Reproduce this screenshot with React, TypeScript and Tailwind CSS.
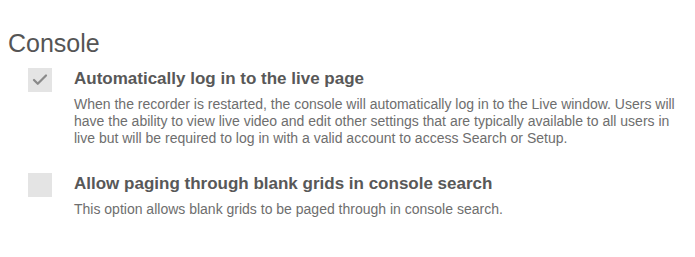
import { Check } from 'lucide-react';

interface Option {
  title: string;
  description: string;
  checked: boolean;
}

const options: Option[] = [
  {
    title: 'Automatically log in to the live page',
    description:
      'When the recorder is restarted, the console will automatically log in to the Live window. Users will have the ability to view live video and edit other settings that are typically available to all users in live but will be required to log in with a valid account to access Search or Setup.',
    checked: true,
  },
  {
    title: 'Allow paging through blank grids in console search',
    description: 'This option allows blank grids to be paged through in console search.',
    checked: false,
  },
];

export default function App() {
  return (
    <div className="w-[695px] h-[257px] bg-white font-['Liberation_Sans',Arial,sans-serif] pl-2 pt-[29px]">
      <h1 className="text-[25px] leading-[28px] text-[#555]">Console</h1>
      <div className="mt-[11px] flex flex-col gap-[26px]">
        {options.map((opt) => (
          <div key={opt.title} className="flex items-start pl-[20px]">
            <div className="w-[24px] h-[24px] bg-[#e4e4e4] flex items-center justify-center shrink-0">
              {opt.checked && <Check size={18} strokeWidth={3} className="text-[#8a8a8a] -ml-[1px]" />}
            </div>
            <div className="ml-[22px] w-[612px]">
              <div className="mt-[1px] text-[17px] leading-[20px] font-bold text-[#585858]">{opt.title}</div>
              <p className="mt-[7px] text-[14px] leading-[17px] text-[#6e6e6e]">{opt.description}</p>
            </div>
          </div>
        ))}
      </div>
    </div>
  );
}
